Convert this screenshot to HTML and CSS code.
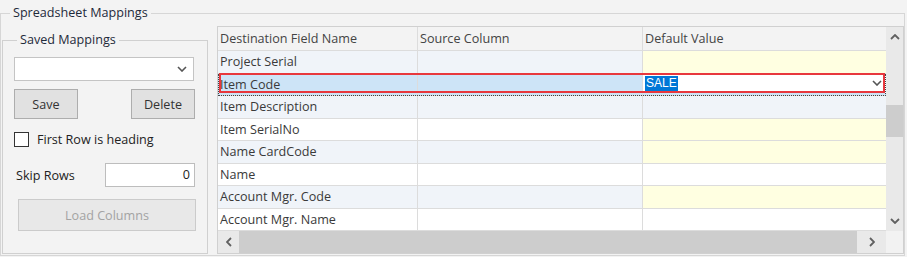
FILE: index.html
```html
<!DOCTYPE html>
<html lang="en">
<head>
    <meta charset="UTF-8">
    <title>Spreadsheet Mappings</title>
    <link rel="stylesheet" href="styles.css">
</head>
<body>
    <fieldset class="outer">
        <legend>Spreadsheet Mappings</legend>
        <div class="body">
            <fieldset class="saved">
                <legend>Saved Mappings</legend>
                <div class="combo">
                    <svg class="chev" width="10" height="6" viewBox="0 0 10 6"><path d="M1 1 L5 5 L9 1" fill="none" stroke="#555" stroke-width="1.6"/></svg>
                </div>
                <div class="btn-row">
                    <button class="btn">Save</button>
                    <button class="btn">Delete</button>
                </div>
                <label class="check"><span class="box"></span>First Row is heading</label>
                <div class="skip">
                    <span>Skip Rows</span>
                    <div class="num">0</div>
                </div>
                <button class="btn load" disabled>Load Columns</button>
            </fieldset>

            <div class="grid">
                <div class="grid-main">
                    <div class="cols">
                        <div class="row head">
                            <div class="c1">Destination Field Name</div>
                            <div class="c2">Source Column</div>
                            <div class="c3">Default Value</div>
                        </div>
                        <div class="row alt">
                            <div class="c1">Project Serial</div>
                            <div class="c2"></div>
                            <div class="c3 yellow"></div>
                        </div>
                        <div class="row sel">
                            <div class="c1">Item Code</div>
                            <div class="c2"></div>
                            <div class="c3 editor">
                                <span class="hl">SALE</span>
                                <svg class="chev" width="10" height="6" viewBox="0 0 10 6"><path d="M1 1 L5 5 L9 1" fill="none" stroke="#555" stroke-width="1.6"/></svg>
                            </div>
                        </div>
                        <div class="row alt">
                            <div class="c1">Item Description</div>
                            <div class="c2"></div>
                            <div class="c3"></div>
                        </div>
                        <div class="row">
                            <div class="c1">Item SerialNo</div>
                            <div class="c2"></div>
                            <div class="c3 yellow"></div>
                        </div>
                        <div class="row alt">
                            <div class="c1">Name CardCode</div>
                            <div class="c2"></div>
                            <div class="c3 yellow"></div>
                        </div>
                        <div class="row">
                            <div class="c1">Name</div>
                            <div class="c2"></div>
                            <div class="c3"></div>
                        </div>
                        <div class="row alt">
                            <div class="c1">Account Mgr. Code</div>
                            <div class="c2"></div>
                            <div class="c3 yellow"></div>
                        </div>
                        <div class="row">
                            <div class="c1">Account Mgr. Name</div>
                            <div class="c2"></div>
                            <div class="c3"></div>
                        </div>
                    </div>
                    <div class="vscroll">
                        <div class="arrow">
                            <svg width="10" height="6" viewBox="0 0 10 6"><path d="M1 5 L5 1 L9 5" fill="none" stroke="#606060" stroke-width="1.8"/></svg>
                        </div>
                        <div class="vtrack"><div class="vthumb"></div></div>
                        <div class="arrow">
                            <svg width="10" height="6" viewBox="0 0 10 6"><path d="M1 1 L5 5 L9 1" fill="none" stroke="#606060" stroke-width="1.8"/></svg>
                        </div>
                    </div>
                </div>
                <div class="hscroll">
                    <div class="harrow left">
                        <svg width="6" height="10" viewBox="0 0 6 10"><path d="M5 1 L1 5 L5 9" fill="none" stroke="#606060" stroke-width="1.8"/></svg>
                    </div>
                    <div class="hthumb"></div>
                    <div class="harrow right">
                        <svg width="6" height="10" viewBox="0 0 6 10"><path d="M1 1 L5 5 L1 9" fill="none" stroke="#606060" stroke-width="1.8"/></svg>
                    </div>
                    <div class="corner"></div>
                </div>
            </div>
        </div>
    </fieldset>
</body>
</html>
```

FILE: styles.css
```css
body {
    margin: 0;
    background-color: #f3f3f3;
    font-family: "Open Sans", "Noto Sans", sans-serif;
    font-size: 12.6px;
    color: #222;
    width: 907px;
    height: 257px;
    overflow: hidden;
}
fieldset {
    margin: 0;
    min-width: 0;
    box-sizing: border-box;
    border: 1px solid #d6d6d6;
}
legend {
    line-height: 16px;
    height: 16px;
    padding: 0 3px;
    color: #1e2a3a;
}
.outer {
    margin-top: 5px;
    width: 905px;
    height: 251px;
    padding: 5px 0 0 1px;
}
.outer > legend {
    margin-left: 8px;
}
.body {
    display: flex;
    align-items: flex-start;
}

/* left panel */
.saved {
    width: 206px;
    height: 222px;
    margin-top: 6px;
    margin-right: 9px;
    padding: 9px 12px 0 11px;
    border-color: #d0d0d0;
}
.saved > legend {
    margin-left: 3px;
}
.combo {
    width: 180px;
    height: 24px;
    box-sizing: border-box;
    background: #fff;
    border: 1px solid #c4c4c4;
    display: flex;
    align-items: center;
    justify-content: flex-end;
    padding-right: 6px;
}
.btn-row {
    display: flex;
    justify-content: space-between;
    margin-top: 8px;
}
.btn {
    font-family: inherit;
    font-size: 12.6px;
    color: #333;
    width: 64px;
    height: 30px;
    background-color: #e1e1e1;
    border: 1px solid #adadad;
    padding: 0;
}
.check {
    display: flex;
    align-items: center;
    margin-top: 12px;
    height: 16px;
}
.box {
    width: 15px;
    height: 15px;
    box-sizing: border-box;
    border: 1px solid #333;
    background: #fff;
    margin-right: 8px;
}
.skip {
    display: flex;
    align-items: center;
    justify-content: space-between;
    margin-top: 16px;
    padding-left: 2px;
    width: 179px;
}
.num {
    width: 90px;
    height: 24px;
    box-sizing: border-box;
    background: #fff;
    border: 1px solid #bdbdbd;
    text-align: right;
    line-height: 22px;
    padding-right: 4px;
}
.load {
    display: block;
    width: 178px;
    height: 32px;
    margin: 12px 0 0 4px;
    background-color: #e8e8e8;
    border-color: #cbcbcb;
    color: #a3a3a3;
}

/* grid */
.grid {
    width: 687px;
    box-sizing: border-box;
    border: 1px solid #d0d0d0;
    background: #fff;
}
.grid-main {
    display: flex;
}
.cols {
    width: 668px;
}
.row {
    display: flex;
    height: 22.5px;
    box-sizing: border-box;
    border-bottom: 1px solid #dcdcdc;
    background: #fff;
    color: #3a3a3a;
    position: relative;
}
.row > div {
    box-sizing: border-box;
    padding-left: 2px;
    line-height: 22.5px;
    white-space: nowrap;
    overflow: hidden;
}
.c1 {
    width: 200px;
    border-right: 1px solid #dcdcdc;
}
.c2 {
    width: 225px;
    border-right: 1px solid #dcdcdc;
}
.c3 {
    width: 243px;
}
.head {
    height: 24px;
    background: #f3f3f3;
    color: #444;
}
.head > div {
    line-height: 24px;
}
.alt {
    background: #f0f4f9;
}
.row .yellow {
    background: #ffffe1;
}
.sel {
    background: #cde4f7;
    outline: 1px dotted #444;
    outline-offset: -1px;
}
.sel::after {
    content: "";
    position: absolute;
    left: 1px;
    right: 1px;
    top: -1px;
    bottom: 2px;
    border: 2px solid #e8383d;
    pointer-events: none;
}
.editor {
    background: #fff;
    display: flex;
    align-items: center;
    justify-content: space-between;
    padding-right: 4px;
    margin-bottom: 2px;
}
.hl {
    background: #0078d7;
    color: #fff;
    line-height: 15px;
    font-family: "Liberation Sans", sans-serif;
    font-size: 12px;
    padding: 0 1px;
}
.vscroll {
    width: 17px;
    display: flex;
    flex-direction: column;
    background: #e9e9e9;
}
.arrow {
    height: 20px;
    display: flex;
    align-items: center;
    justify-content: center;
}
.vtrack {
    flex: 1;
    padding-top: 58px;
}
.vthumb {
    height: 32px;
    background: #cdcdcd;
}
.hscroll {
    display: flex;
    height: 22px;
}
.harrow {
    display: flex;
    align-items: center;
    justify-content: center;
    background: #e9e9e9;
}
.harrow.left {
    width: 21px;
}
.harrow.right {
    width: 29px;
}
.hthumb {
    width: 618px;
    background: #cdcdcd;
}
.corner {
    width: 17px;
    background: #f2f2f2;
}
```
